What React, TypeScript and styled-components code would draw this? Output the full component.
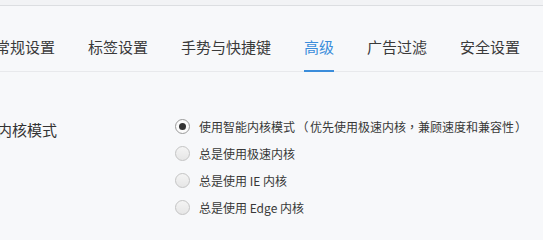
import React from "react";
import styled, { createGlobalStyle } from "styled-components";

const Global = createGlobalStyle`
  html, body { margin: 0; padding: 0; background: #f7f8fa; overflow: hidden; }
  body { font-family: "Noto Sans CJK SC", "Noto Sans", sans-serif; }
`;

const Page = styled.div`
  width: 543px;
  height: 235px;
  background: #f7f8fa;
  overflow: hidden;
`;

const TopStrip = styled.div`
  height: 5px;
  background: #f2f3f5;
  border-bottom: 1px solid #dcdee1;
`;

const TabBar = styled.div`
  display: flex;
  gap: 33px;
  margin-left: -5px;
  border-bottom: 1px solid #e8e9ec;
`;

const Tab = styled.div<{ $active?: boolean }>`
  height: 66px;
  box-sizing: border-box;
  display: flex;
  align-items: flex-end;
  padding-bottom: 13px;
  font-size: 15px;
  line-height: 20px;
  white-space: nowrap;
  color: ${(p) => (p.$active ? "#3b8ddb" : "#3a3a3a")};
  border-bottom: 2px solid ${(p) => (p.$active ? "#3b8ddb" : "transparent")};
  margin-bottom: -1px;
`;

const Section = styled.div`
  display: flex;
  padding-top: 41px;
`;

const Label = styled.div`
  width: 178px;
  margin-left: -3px;
  padding-top: 7px;
  font-size: 15px;
  line-height: 20px;
  color: #333;
  flex-shrink: 0;
`;

const Options = styled.div`
  display: flex;
  flex-direction: column;
`;

const Option = styled.label`
  display: flex;
  align-items: center;
  gap: 9px;
  height: 27px;
  font-size: 12px;
  color: #383838;
  white-space: nowrap;
`;

const Punct = styled.span<{ $w: number }>`
  display: inline-block;
  width: ${(p) => p.$w}px;
  text-align: center;
  font-family: "Noto Sans CJK TC", "Noto Sans CJK SC", sans-serif;
`;

const Circle = styled.span<{ $checked?: boolean }>`
  width: 13px;
  height: 13px;
  border-radius: 50%;
  border: 1px solid ${(p) => (p.$checked ? "#9a9a9a" : "#c4c4c4")};
  background: ${(p) => (p.$checked ? "#fbfbfb" : "linear-gradient(#f4f4f4, #e6e6e6)")};
  display: flex;
  align-items: center;
  justify-content: center;
  flex-shrink: 0;
  &::after {
    content: "";
    display: ${(p) => (p.$checked ? "block" : "none")};
    width: 7px;
    height: 7px;
    border-radius: 50%;
    background: #333;
  }
`;

const tabs = ["常规设置", "标签设置", "手势与快捷键", "高级", "广告过滤", "安全设置"];

export default function App() {
  return (
    <Page>
      <Global />
      <TopStrip />
      <TabBar>
        {tabs.map((t) => (
          <Tab key={t} $active={t === "高级"}>
            {t}
          </Tab>
        ))}
      </TabBar>
      <Section>
        <Label>内核模式</Label>
        <Options>
          <Option>
            <Circle $checked />
            <span>
              使用智能内核模式<Punct $w={15}>（</Punct>优先使用极速内核<Punct $w={12}>，</Punct>兼顾速度和兼容性<Punct $w={14}>）</Punct>
            </span>
          </Option>
          <Option>
            <Circle />
            总是使用极速内核
          </Option>
          <Option>
            <Circle />
            总是使用 IE 内核
          </Option>
          <Option>
            <Circle />
            总是使用 Edge 内核
          </Option>
        </Options>
      </Section>
    </Page>
  );
}
